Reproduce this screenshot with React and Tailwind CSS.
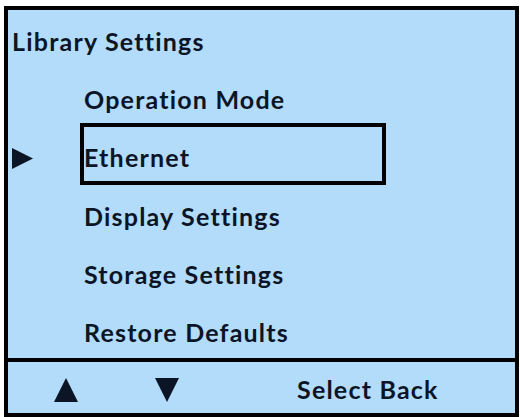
export default function App() {
  const font = { fontFamily: "Lato, 'Open Sans', sans-serif" };
  return (
    <div className="w-[520px] h-[417px] bg-white pl-[4px] pt-[6px] overflow-hidden" style={font}>
      <div className="w-[515px] h-[411px] border-4 border-black bg-[#b3dbfa] text-[#0b1526] font-bold text-[25px] tracking-[1.2px] flex flex-col">
        {/* menu */}
        <div className="h-[348px] flex flex-col">
          <div className="mt-[6px] pl-[4px] h-[50px] leading-[50px]">Library Settings</div>
          <div className="mt-[9px] pl-[76px] h-[48px] leading-[48px]">Operation Mode</div>
          <div className="flex items-center h-[62px]">
            <svg width="21" height="21" viewBox="0 0 21 21" className="ml-[4px] mt-[8px]">
              <polygon points="0,0 21,10.5 0,21" fill="#0b1526" />
            </svg>
            <div className="ml-[47px] w-[306px] h-[62px] border-4 border-black pt-[6px] leading-[48px]">
              Ethernet
            </div>
          </div>
          <div className="mt-[6px] pl-[76px] h-[50px] leading-[50px]">Display Settings</div>
          <div className="mt-[8px] pl-[76px] h-[50px] leading-[50px]">Storage Settings</div>
          <div className="mt-[8px] pl-[76px] h-[50px] leading-[50px]">Restore Defaults</div>
        </div>
        {/* footer */}
        <div className="flex-1 border-t-4 border-black flex items-center pt-[5px]">
          <svg width="24" height="24" viewBox="0 0 24 24" className="ml-[46px]">
            <polygon points="12,0 24,24 0,24" fill="#0b1526" />
          </svg>
          <svg width="24" height="24" viewBox="0 0 24 24" className="ml-[77px]">
            <polygon points="0,0 24,0 12,24" fill="#0b1526" />
          </svg>
          <span className="ml-[118px]">Select Back</span>
        </div>
      </div>
    </div>
  );
}
